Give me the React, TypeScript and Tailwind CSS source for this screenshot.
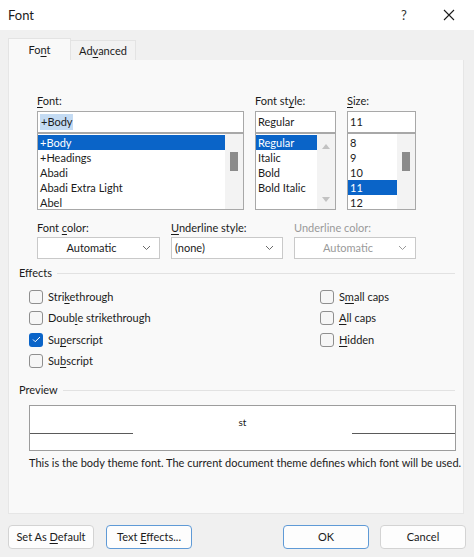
import type { ReactNode } from 'react';

// Mnemonic letter, underlined like a Windows access key
function U({ children }: { children: ReactNode }) {
  return <span className="underline underline-offset-[2px] decoration-1">{children}</span>;
}

function Chevron({ muted }: { muted?: boolean }) {
  return (
    <svg width="9" height="6" viewBox="0 0 9 6" className="shrink-0">
      <path d="M1 1l3.5 3.5L8 1" fill="none" stroke={muted ? '#9a9a9a' : '#6a6a6a'} strokeWidth="1" />
    </svg>
  );
}

function ListBox({
  items,
  selected,
  width,
  scroll,
}: {
  items: string[];
  selected: number;
  width: string;
  scroll: 'thumb' | 'arrows';
}) {
  return (
    <div className={`${width} h-[77px] border border-[#a8a8a8] bg-white flex`}>
      <div className="flex-1 pt-px">
        {items.map((item, i) => (
          <div
            key={item}
            className={`h-[15px] leading-[15px] pl-[2px] ${i === selected ? 'bg-[#0a64c8] text-white' : ''}`}
          >
            {item}
          </div>
        ))}
      </div>
      <div className="w-[18px] bg-[#f3f3f3] flex flex-col items-center">
        {scroll === 'thumb' ? (
          <div className="mt-[18px] w-[8px] h-[19px] bg-[#8b8b8b]" />
        ) : (
          <>
            <svg width="8" height="5" viewBox="0 0 8 5" className="mt-[10px]">
              <path d="M0 5L4 0L8 5Z" fill="#c2c2c2" />
            </svg>
            <div className="flex-1" />
            <svg width="8" height="5" viewBox="0 0 8 5" className="mb-[7px]">
              <path d="M0 0L4 5L8 0Z" fill="#c2c2c2" />
            </svg>
          </>
        )}
      </div>
    </div>
  );
}

function Dropdown({ value, width, center, muted }: { value: string; width: string; center?: boolean; muted?: boolean }) {
  return (
    <div className={`${width} h-[22px] border border-[#c9c9c9] bg-white flex items-center pl-[3px] pr-[8px]`}>
      <span className={`flex-1 ${center ? 'text-center' : ''} ${muted ? 'text-[#9a9a9a]' : ''}`}>{value}</span>
      <Chevron muted={muted} />
    </div>
  );
}

function Check({ label, checked }: { label: ReactNode; checked?: boolean }) {
  return (
    <div className="h-[21.5px] flex items-center gap-[5px]">
      {checked ? (
        <div className="w-[14px] h-[14px] rounded-[3px] bg-[#0a64c8] flex items-center justify-center">
          <svg width="9" height="7" viewBox="0 0 9 7">
            <path d="M1 3.5l2.2 2.2L8 1" fill="none" stroke="white" strokeWidth="1" />
          </svg>
        </div>
      ) : (
        <div className="w-[14px] h-[14px] rounded-[3px] border border-[#8f8f8f] bg-[#f6f6f6]" />
      )}
      <span>{label}</span>
    </div>
  );
}

function Button({ children, primary, width }: { children: ReactNode; primary?: boolean; width: string }) {
  return (
    <div
      className={`${width} h-[24px] rounded-[4px] border bg-[#fdfdfd] flex items-center justify-center ${
        primary ? 'border-[#5f9ad6]' : 'border-[#d3d3d3]'
      }`}
    >
      <span>{children}</span>
    </div>
  );
}

export default function App() {
  return (
    <div
      className="w-[474px] h-[557px] bg-[#f0f0f0] text-[#1b1b1b] text-[11px] leading-[16px] overflow-hidden"
      style={{ fontFamily: 'Lato, "Noto Sans", sans-serif' }}
    >
      {/* Title bar */}
      <div className="h-[30px] bg-white flex items-center pl-[8px]">
        <span className="flex-1 text-[13px]">Font</span>
        <span className="w-[20px] text-center text-[13px] text-[#333]">?</span>
        <div className="w-[29px]" />
        <svg width="12" height="12" viewBox="0 0 12 12" className="mr-[19px]">
          <path d="M1 1L11 11M11 1L1 11" stroke="#1b1b1b" strokeWidth="1.1" />
        </svg>
      </div>

      {/* Tabs */}
      <div className="px-[8px] pt-[8px] flex items-end">
        <div className="w-[63px] h-[22px] bg-[#f9f9f9] border border-b-0 border-[#e3e3e3] flex items-center justify-center">
          <span>
            Fo<U>n</U>t
          </span>
        </div>
        <div className="w-[65px] h-[20px] bg-[#f2f2f2] border border-l-0 border-b-0 border-[#e3e3e3] flex items-center justify-center">
          <span>
            Ad<U>v</U>anced
          </span>
        </div>
      </div>

      {/* Tab panel */}
      <div className="mx-[8px] w-[456px] h-[454px] bg-[#f9f9f9] border border-t-0 border-[#e6e6e6]">
        <div className="pl-[28px] pt-[33px] flex gap-[11px]">
          <div className="w-[207px]">
            <div className="h-[18px]">
              <U>F</U>ont:
            </div>
            <div className="h-[22px] border border-[#a8a8a8] bg-white flex items-center pl-[2px]">
              <span className="bg-[#c4dbf3] px-px">+Body</span>
            </div>
            <ListBox
              items={['+Body', '+Headings', 'Abadi', 'Abadi Extra Light', 'Abel']}
              selected={0}
              width="w-[207px]"
              scroll="thumb"
            />
          </div>
          <div className="w-[81px]">
            <div className="h-[18px]">
              Font st<U>y</U>le:
            </div>
            <div className="h-[22px] border border-[#a8a8a8] bg-white flex items-center pl-[2px]">Regular</div>
            <ListBox
              items={['Regular', 'Italic', 'Bold', 'Bold Italic']}
              selected={0}
              width="w-[81px]"
              scroll="arrows"
            />
          </div>
          <div className="w-[69px]">
            <div className="h-[18px]">
              <U>S</U>ize:
            </div>
            <div className="h-[22px] border border-[#a8a8a8] bg-white flex items-center pl-[2px]">11</div>
            <ListBox items={['8', '9', '10', '11', '12']} selected={3} width="w-[69px]" scroll="thumb" />
          </div>
        </div>

        {/* Color / underline row */}
        <div className="pl-[28px] mt-[10px] flex gap-[11px]">
          <div>
            <div className="h-[17px]">
              Font <U>c</U>olor:
            </div>
            <Dropdown value="Automatic" width="w-[123px]" center />
          </div>
          <div>
            <div className="h-[17px]">
              <U>U</U>nderline style:
            </div>
            <Dropdown value="(none)" width="w-[112px]" />
          </div>
          <div>
            <div className="h-[17px] text-[#9a9a9a]">Underline color:</div>
            <Dropdown value="Automatic" width="w-[122px]" center muted />
          </div>
        </div>

        {/* Effects */}
        <div className="pl-[10px] pr-[8px] mt-[6px] h-[16px] flex items-center gap-[5px]">
          <span>Effects</span>
          <div className="flex-1 h-px bg-[#e2e2e2]" />
        </div>
        <div className="pl-[20px] mt-[5px] flex">
          <div className="w-[291px]">
            <Check label={<>Stri<U>k</U>ethrough</>} />
            <Check label={<>Doub<U>l</U>e strikethrough</>} />
            <Check label={<>Su<U>p</U>erscript</>} checked />
            <Check label={<>Su<U>b</U>script</>} />
          </div>
          <div>
            <Check label={<>S<U>m</U>all caps</>} />
            <Check label={<><U>A</U>ll caps</>} />
            <Check label={<><U>H</U>idden</>} />
          </div>
        </div>

        {/* Preview */}
        <div className="pl-[10px] pr-[8px] mt-[10px] h-[16px] flex items-center gap-[5px]">
          <span>Preview</span>
          <div className="flex-1 h-px bg-[#e2e2e2]" />
        </div>
        <div className="ml-[20px] mt-[7px] w-[427px] h-[46px] border border-[#9c9c9c] bg-white flex flex-col">
          <div className="h-[28px] flex items-end">
            <div className="w-[103px] h-px bg-[#5a5a5a]" />
            <div className="flex-1 text-center text-[10px] leading-[12px] mb-[6px]">st</div>
            <div className="w-[103px] h-px bg-[#5a5a5a]" />
          </div>
        </div>
        <div className="ml-[20px] mt-[4px] h-[16px] whitespace-nowrap">
          This is the body theme font. The current document theme defines which font will be used.
        </div>
      </div>

      {/* Dialog buttons */}
      <div className="px-[8px] mt-[11px] flex">
        <Button width="w-[86px]">
          Set As <U>D</U>efault
        </Button>
        <div className="w-[12px]" />
        <Button width="w-[86px]" primary>
          Text <U>E</U>ffects...
        </Button>
        <div className="flex-1" />
        <Button width="w-[86px]" primary>
          OK
        </Button>
        <div className="w-[11px]" />
        <Button width="w-[86px]">Cancel</Button>
      </div>
    </div>
  );
}
